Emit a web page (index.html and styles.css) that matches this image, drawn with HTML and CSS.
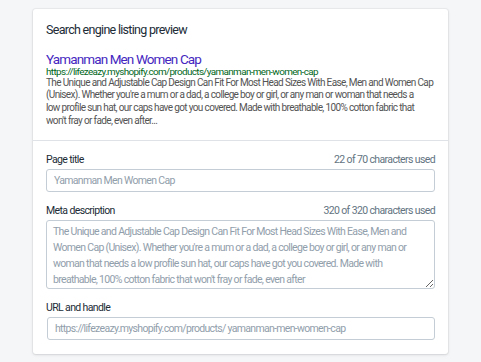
FILE: index.html
```html
<!DOCTYPE html>
<html lang="en">

<head>
    <meta charset="UTF-8">
    <meta name="viewport" content="width=device-width, initial-scale=1.0">
    <title>Search engine listing preview</title>
    <link rel="stylesheet" href="styles.css">
</head>

<body>
    <div class="card">
        <div class="section preview">
            <h2 class="heading">Search engine listing preview</h2>
            <div class="result">
                <div class="result-title">Yamanman Men Women Cap</div>
                <div class="result-url">https://lifezeazy.myshopify.com/products/yamanman-men-women-cap</div>
                <div class="result-desc">The Unique and Adjustable Cap Design Can Fit For Most Head Sizes With Ease, Men and Women Cap (Unisex). Whether you're a mum or a dad, a college boy or girl, or any man or woman that needs a<br>low profile sun hat, our caps have got you covered. Made with breathable, 100% cotton fabric that won't fray or fade, even after...</div>
            </div>
        </div>
        <div class="section fields">
            <div class="field">
                <div class="label-row">
                    <label class="label">Page title</label>
                    <span class="counter">22 of 70 characters used</span>
                </div>
                <input class="input" type="text" placeholder="Yamanman Men Women Cap">
            </div>
            <div class="field">
                <div class="label-row">
                    <label class="label">Meta description</label>
                    <span class="counter">320 of 320 characters used</span>
                </div>
                <textarea class="input textarea" placeholder="The Unique and Adjustable Cap Design Can Fit For Most Head Sizes With Ease, Men and Women Cap (Unisex). Whether you're a mum or a dad, a college boy or girl, or any man or woman that needs a low profile sun hat, our caps have got you covered. Made with breathable, 100% cotton fabric that won't fray or fade, even after"></textarea>
            </div>
            <div class="field">
                <div class="label-row">
                    <label class="label">URL and handle</label>
                </div>
                <input class="input url" type="text" placeholder="https://lifezeazy.myshopify.com/products/ yamanman-men-women-cap">
            </div>
        </div>
    </div>
</body>

</html>
```

FILE: styles.css
```css
* {
    padding: 0;
    margin: 0;
    box-sizing: border-box;
}

body {
    background-color: #f4f6f8;
    font-family: Roboto, "Noto Sans", sans-serif;
    color: #212b36;
    padding: 9px 33px;
}

.card {
    background-color: #fff;
    border-radius: 3px;
    box-shadow: 0 0 0 1px rgba(63, 63, 68, 0.05), 0 1px 3px 0 rgba(63, 63, 68, 0.15);
}

.section {
    padding: 13px;
}

.fields {
    border-top: 1px solid #dfe3e8;
    padding-top: 11px;
    padding-bottom: 14px;
}

.heading {
    font-size: 12.5px;
    font-weight: 400;
    line-height: 16px;
    letter-spacing: -0.7px;
    margin-bottom: 15px;
}

.result-title {
    font-size: 13.5px;
    line-height: 13.5px;
    letter-spacing: -0.88px;
    color: #4527c0;
}

.result-url {
    font-size: 9.9px;
    line-height: 10px;
    letter-spacing: -0.63px;
    color: #006621;
}

.result-desc {
    max-width: 387.5px;
    font-size: 10px;
    line-height: 12.7px;
    letter-spacing: -0.64px;
    color: #545454;
}

.field {
    margin-bottom: 11px;
}

.field:last-child {
    margin-bottom: 0;
}

.label-row {
    display: flex;
    justify-content: space-between;
    align-items: baseline;
    font-size: 10.5px;
    line-height: 16px;
    letter-spacing: -0.62px;
    margin-bottom: 1px;
}

.counter {
    color: #637381;
}

.input {
    display: block;
    width: 100%;
    height: 23px;
    border: 1px solid #c4cdd5;
    border-radius: 3px;
    padding: 0 7px;
    font-family: inherit;
    font-size: 10.5px;
    letter-spacing: -0.68px;
    color: #212b36;
    outline: none;
}

.input::placeholder {
    color: #919eab;
}

.textarea {
    height: 69px;
    padding: 3px 6px 0;
    line-height: 16px;
    overflow: hidden;
    resize: vertical;
}

.url {
    margin-left: 1px;
    width: calc(100% - 1px);
}
```
